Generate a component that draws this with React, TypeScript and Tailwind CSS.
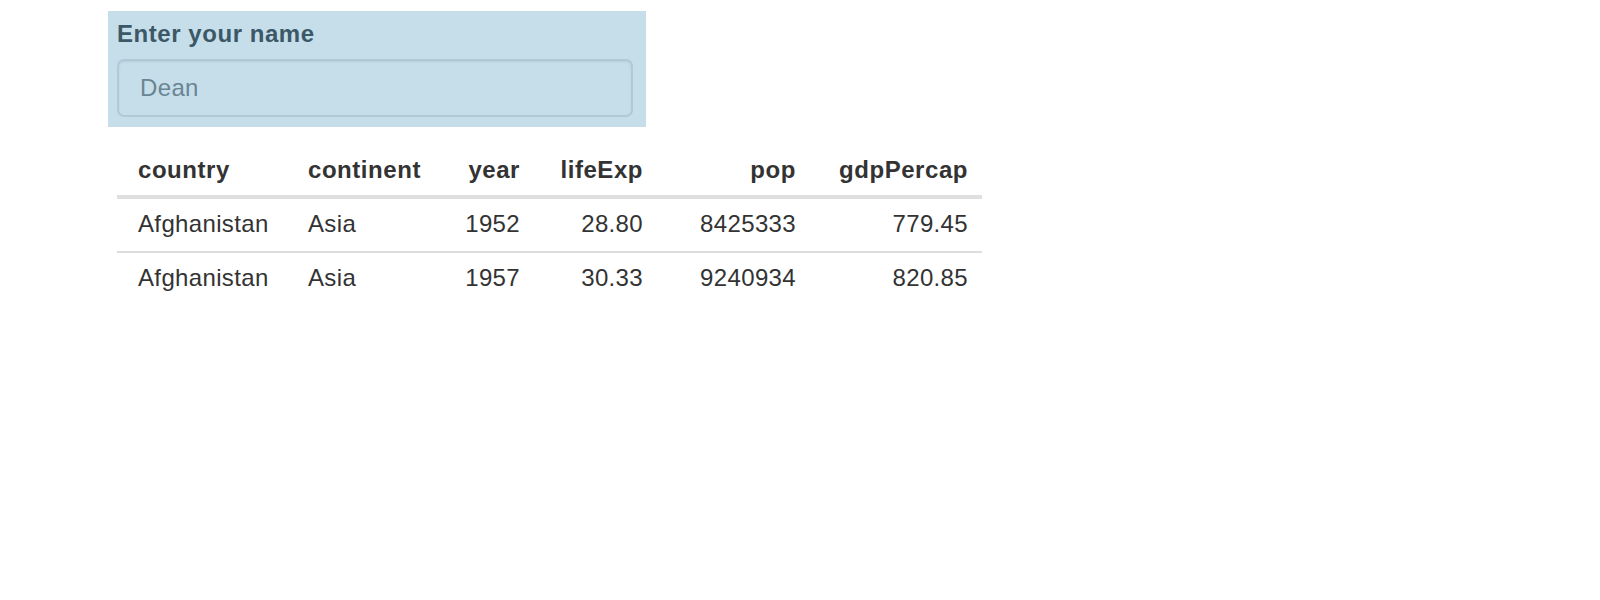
const rows = [
  { country: 'Afghanistan', continent: 'Asia', year: '1952', lifeExp: '28.80', pop: '8425333', gdp: '779.45' },
  { country: 'Afghanistan', continent: 'Asia', year: '1957', lifeExp: '30.33', pop: '9240934', gdp: '820.85' },
]

export default function App() {
  return (
    <div
      className="min-h-[600px] bg-white pl-[108px] pt-[11px] text-[24px] leading-[34px] tracking-[0.35px] text-[#333333]"
      style={{ fontFamily: '"Liberation Sans", Arial, sans-serif' }}
    >
      <div className="w-[538px] bg-[#c5deea] px-[9px] pb-[10px] pt-[6px]">
        <label htmlFor="name" className="mb-[8px] block font-bold tracking-[0.55px] text-[#3c5867]">
          Enter your name
        </label>
        <input
          id="name"
          defaultValue="Dean"
          className="block h-[58px] w-[516px] rounded-[7px] border-2 border-[#b2c9d5] bg-[#c5deea] px-[21px] text-[24px] text-[#6a8592] shadow-[inset_0_1px_2px_rgba(60,88,103,0.12)] outline-none"
        />
      </div>

      <table className="ml-[9px] mt-[16px] w-[865px] table-fixed border-collapse">
        <thead>
          <tr className="border-b-4 border-[#dfdfdf] tracking-[0.55px]">
            <th className="w-[177px] pb-[8px] pl-[21px] pr-[14px] pt-[10px] text-left font-bold">country</th>
            <th className="w-[146px] px-[14px] pb-[8px] pt-[10px] text-left font-bold">continent</th>
            <th className="w-[94px] px-[14px] pb-[8px] pt-[10px] text-right font-bold">year</th>
            <th className="w-[123px] px-[14px] pb-[8px] pt-[10px] text-right font-bold">lifeExp</th>
            <th className="w-[153px] px-[14px] pb-[8px] pt-[10px] text-right font-bold">pop</th>
            <th className="w-[172px] pb-[8px] pl-[14px] pr-[14px] pt-[10px] text-right font-bold">gdpPercap</th>
          </tr>
        </thead>
        <tbody>
          {rows.map((r, i) => (
            <tr key={i} className={i < rows.length - 1 ? 'border-b-2 border-[#dddddd]' : ''}>
              <td className="pb-[10px] pl-[21px] pr-[14px] pt-[8px] text-left">{r.country}</td>
              <td className="px-[14px] pb-[10px] pt-[8px] text-left">{r.continent}</td>
              <td className="px-[14px] pb-[10px] pt-[8px] text-right">{r.year}</td>
              <td className="px-[14px] pb-[10px] pt-[8px] text-right">{r.lifeExp}</td>
              <td className="px-[14px] pb-[10px] pt-[8px] text-right">{r.pop}</td>
              <td className="pb-[10px] pl-[14px] pr-[14px] pt-[8px] text-right">{r.gdp}</td>
            </tr>
          ))}
        </tbody>
      </table>
    </div>
  )
}
